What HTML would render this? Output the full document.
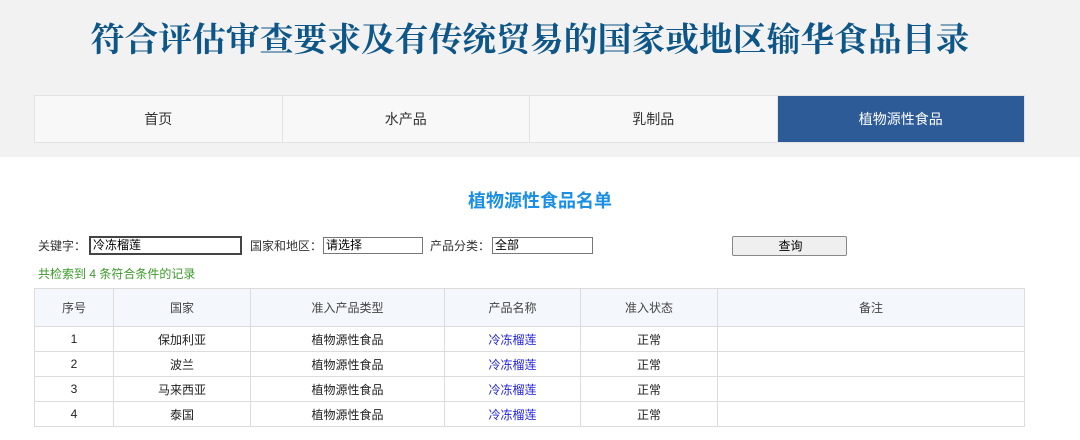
<!DOCTYPE html><html><head><meta charset="utf-8"><style>
body{margin:0;width:1080px;height:440px;overflow:hidden;background:#fff;font-family:"Liberation Sans","Noto Sans CJK SC",sans-serif;font-size:12px;color:#333;position:relative}
.band{position:absolute;left:0;top:0;width:1080px;height:157px;background:#f2f2f2}
.title{position:absolute;left:-10px;top:16px;width:1080px;text-align:center;font-family:"Liberation Serif","Noto Serif CJK SC",serif;font-weight:bold;font-size:33.8px;color:#0d5687;line-height:50px}
.nav{position:absolute;left:34px;top:95px;width:991px;height:48px;display:flex;border:1px solid #e2e2e2;box-sizing:border-box}
.nav div{flex:1;background:#f8f8f8;border-right:1px solid #e2e2e2;text-align:center;line-height:46px;font-size:14px;color:#333}
.nav div.on{background:#2d5b97;color:#fff;border:none}
h2{position:absolute;left:0;top:188px;width:1080px;margin:0;text-align:center;font-size:18px;color:#1a8fe3;line-height:26px}
.f{position:absolute;top:236px;font-size:12px;color:#333;line-height:20px}
.in{position:absolute;top:237px;height:17px;border:1px solid #777;box-sizing:border-box;background:#fff;font-size:12px;line-height:15px;padding-left:2px;color:#000}
.cnt{position:absolute;left:38px;top:265px;color:#3a9a2a;font-size:12px;line-height:18px}
table{position:absolute;left:34px;top:288px;width:991px;border-collapse:collapse;table-layout:fixed}
td,th{border:1px solid #dcdcdc;text-align:center;font-weight:normal;font-size:12px;color:#222;height:24px;padding:0}
th{background:#f4f8fc;height:37px;color:#444}
a{color:#2222dd;text-decoration:none}
</style></head><body>
<div class="band"></div>
<div class="title">符合评估审查要求及有传统贸易的国家或地区输华食品目录</div>
<div class="nav"><div>首页</div><div>水产品</div><div>乳制品</div><div class="on">植物源性食品</div></div>
<h2>植物源性食品名单</h2>
<div class="f" style="left:38px">关键字：</div>
<div class="in" style="left:89px;width:153px;border:2px solid #444;top:236px;height:19px">冷冻榴莲</div>
<div class="f" style="left:250px">国家和地区：</div>
<div class="in" style="left:323px;width:100px">请选择</div>
<div class="f" style="left:430px">产品分类：</div>
<div class="in" style="left:492px;width:101px">全部</div>
<div class="in" style="left:732px;width:115px;top:236px;height:20px;background:#efefef;border:1px solid #888;text-align:center;line-height:18px;border-radius:2px">查询</div>
<div class="cnt">共检索到 4 条符合条件的记录</div>
<table>
<colgroup><col style="width:79px"><col style="width:137px"><col style="width:194px"><col style="width:136px"><col style="width:137px"><col></colgroup>
<tr><th>序号</th><th>国家</th><th>准入产品类型</th><th>产品名称</th><th>准入状态</th><th>备注</th></tr>
<tr><td>1</td><td>保加利亚</td><td>植物源性食品</td><td><a>冷冻榴莲</a></td><td>正常</td><td></td></tr>
<tr><td>2</td><td>波兰</td><td>植物源性食品</td><td><a>冷冻榴莲</a></td><td>正常</td><td></td></tr>
<tr><td>3</td><td>马来西亚</td><td>植物源性食品</td><td><a>冷冻榴莲</a></td><td>正常</td><td></td></tr>
<tr><td>4</td><td>泰国</td><td>植物源性食品</td><td><a>冷冻榴莲</a></td><td>正常</td><td></td></tr>
</table>
</body></html>
